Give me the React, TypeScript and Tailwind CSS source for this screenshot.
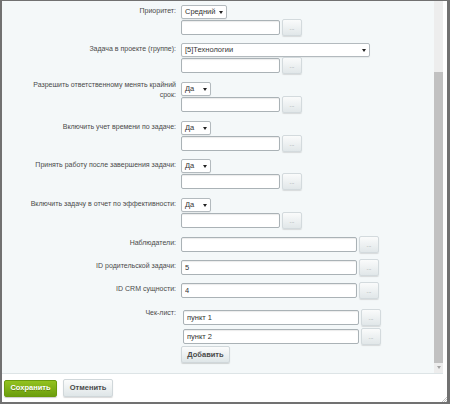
import React from 'react';

const font = "font-['Liberation_Sans',Arial,sans-serif]";

function Dots() {
  return (
    <button className="w-[20px] h-[17px] shrink-0 rounded-[2px] border border-[#d3dadd] bg-gradient-to-b from-[#fafbfb] to-[#e1e7e9] shadow-[0_1px_1px_rgba(0,0,0,0.12)] text-[6px] leading-[6px] text-[#8a9194] flex items-center justify-center">
      ...
    </button>
  );
}

function Field({ value = '', width }: { value?: string; width: string }) {
  return (
    <input
      readOnly
      value={value}
      className={`${width} h-[15px] shrink-0 rounded-[2px] border border-[#aab2b6] bg-white px-[3px] text-[7.5px] text-[#333] shadow-[inset_0_1px_1px_rgba(0,0,0,0.08)] outline-none`}
    />
  );
}

function Select({ value, width }: { value: string; width: string }) {
  return (
    <div className={`${width} h-[14px] rounded-[2px] border border-[#b3babe] bg-white flex items-center justify-between pl-[3px] pr-[3px] text-[7.5px] text-[#333] shadow-[0_1px_1px_rgba(0,0,0,0.06)]`}>
      <span>{value}</span>
      <span className="w-0 h-0 border-l-[2px] border-r-[2px] border-t-[3px] border-l-transparent border-r-transparent border-t-[#222]" />
    </div>
  );
}

function Row({ label, className = '', labelPad = 'pt-[1px]', children }: { label: React.ReactNode; className?: string; labelPad?: string; children: React.ReactNode }) {
  return (
    <div className={`flex ${className}`}>
      <div className={`w-[176px] shrink-0 pl-[24px] pr-[2px] ${labelPad} text-right text-[7px] leading-[10px] text-[#4a4a4a]`}>{label}</div>
      <div className="ml-[3px] flex flex-col">{children}</div>
    </div>
  );
}

function SelectRow({ label, value, selectWidth, className = '', labelPad }: { label: string; value: string; selectWidth: string; className?: string; labelPad?: string }) {
  return (
    <Row label={label} className={className} labelPad={labelPad}>
      <Select value={value} width={selectWidth} />
      <div className="flex items-center gap-[2px] h-[17px]">
        <Field width="w-[99px]" />
        <Dots />
      </div>
    </Row>
  );
}

function GreyButton({ children, className = '' }: { children: React.ReactNode; className?: string }) {
  return (
    <button className={`h-[17px] rounded-[2px] border border-[#d0d7da] bg-gradient-to-b from-[#fbfcfc] to-[#dfe6e8] shadow-[0_1px_1px_rgba(0,0,0,0.15)] text-[7.5px] font-bold text-[#4a4a4a] ${className}`}>
      {children}
    </button>
  );
}

export default function App() {
  return (
    <div className={`relative w-[450px] h-[404px] overflow-hidden border-t border-l-2 border-r-[3px] border-b-2 border-[#717171] bg-white flex flex-col ${font}`}>
      <div className="h-[373px] mr-[4px] flex bg-[#f4f8f9] border-b border-[#dde4e6]">
        <div className="flex-1 pt-[4px] flex flex-col">
          <SelectRow label="Приоритет:" value="Средний" selectWidth="w-[46px]" />
          <SelectRow label="Задача в проекте (группе):" value="[5]Технологии" selectWidth="w-[189px]" className="mt-[7px]" />
          <SelectRow label="Разрешить ответственному менять крайний срок:" value="Да" selectWidth="w-[30px]" className="mt-[8px]" labelPad="-mt-[2px]" />
          <SelectRow label="Включить учет времени по задаче:" value="Да" selectWidth="w-[30px]" className="mt-[8px]" />
          <SelectRow label="Принять работу после завершения задачи:" value="Да" selectWidth="w-[30px]" className="mt-[7px]" />
          <SelectRow label="Включить задачу в отчет по эффективности:" value="Да" selectWidth="w-[30px]" className="mt-[8px]" />

          <Row label="Наблюдатели:" className="mt-[7px]" labelPad="pt-[2px]">
            <div className="flex items-center gap-[2px] h-[17px]">
              <Field width="w-[176px]" />
              <Dots />
            </div>
          </Row>
          <Row label="ID родительской задачи:" className="mt-[6px]" labelPad="pt-[2px]">
            <div className="flex items-center gap-[2px] h-[17px]">
              <Field width="w-[176px]" value="5" />
              <Dots />
            </div>
          </Row>
          <Row label="ID CRM сущности:" className="mt-[6px]" labelPad="pt-[2px]">
            <div className="flex items-center gap-[2px] h-[17px]">
              <Field width="w-[176px]" value="4" />
              <Dots />
            </div>
          </Row>
          <Row label="Чек-лист:" className="mt-[10px]" labelPad="-mt-[1px]">
            <div className="ml-[2px] flex flex-col">
              <div className="flex items-center gap-[2px] h-[17px]">
                <Field width="w-[176px]" value="пункт 1" />
                <Dots />
              </div>
              <div className="mt-[2px] flex items-center gap-[2px] h-[17px]">
                <Field width="w-[176px]" value="пункт 2" />
                <Dots />
              </div>
            </div>
            <GreyButton className="mt-[1px] w-[49px] h-[16px]">Добавить</GreyButton>
          </Row>
        </div>

        {/* scrollbar */}
        <div className="w-[9px] bg-[#ededed] flex flex-col items-center">
          <div className="mt-[71px] w-[9px] h-[291px] bg-[#c1c1c1]" />
          <div className="mt-[3px] w-0 h-0 border-l-[2px] border-r-[2px] border-t-[3px] border-l-transparent border-r-transparent border-t-[#a3a3a3]" />
        </div>
      </div>

      <div className="pl-[2px] pt-[5px] flex items-center gap-[6px]">
        <button className="w-[53px] h-[17px] rounded-[2px] border border-[#6a9a0c] bg-gradient-to-b from-[#93c21f] to-[#6c9e0e] shadow-[0_1px_1px_rgba(0,0,0,0.2)] text-[7.5px] font-bold text-white [text-shadow:0_1px_0_rgba(0,0,0,0.25)]">
          Сохранить
        </button>
        <GreyButton className="w-[50px] h-[18px]">Отменить</GreyButton>
      </div>

      {/* resize grip */}
      <svg className="absolute right-0 bottom-0" width="6" height="6" viewBox="0 0 6 6">
        <path d="M6 1 L1 6 M6 3 L3 6 M6 5 L5 6" stroke="#b5b5b5" strokeWidth="0.8" />
      </svg>
    </div>
  );
}
